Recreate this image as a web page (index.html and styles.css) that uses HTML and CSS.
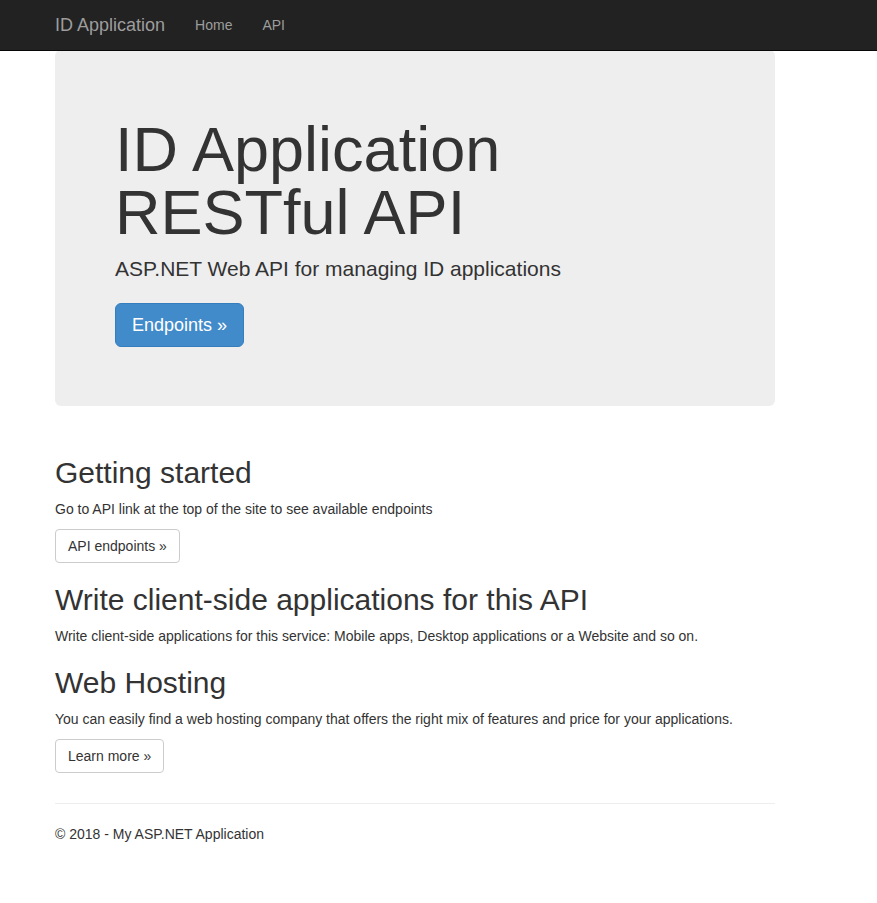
FILE: index.html
```html
<!DOCTYPE html>
<html lang="en">
<head>
<meta charset="utf-8">
<title>ID Application</title>
<link rel="stylesheet" href="styles.css">
</head>
<body>
<div class="navbar">
  <div class="container nav-inner">
    <a class="navbar-brand" href="#">ID Application</a>
    <ul class="nav">
      <li><a href="#">Home</a></li>
      <li><a href="#">API</a></li>
    </ul>
  </div>
</div>
<div class="container body-content">
  <div class="jumbotron">
    <h1>ID Application RESTful API</h1>
    <p class="lead">ASP.NET Web API for managing ID applications</p>
    <p class="jumbo-actions"><a href="#" class="btn btn-primary btn-lg">Endpoints &raquo;</a></p>
  </div>
  <div class="row">
    <div class="col">
      <h2>Getting started</h2>
      <p>Go to API link at the top of the site to see available endpoints</p>
      <p class="actions"><a class="btn btn-default" href="#">API endpoints &raquo;</a></p>
    </div>
    <div class="col">
      <h2>Write client-side applications for this API</h2>
      <p>Write client-side applications for this service: Mobile apps, Desktop applications or a Website and so on.</p>
    </div>
    <div class="col">
      <h2>Web Hosting</h2>
      <p>You can easily find a web hosting company that offers the right mix of features and price for your applications.</p>
      <p class="actions"><a class="btn btn-default" href="#">Learn more &raquo;</a></p>
    </div>
  </div>
  <hr>
  <footer>
    <p>&copy; 2018 - My ASP.NET Application</p>
  </footer>
</div>
</body>
</html>
```
FILE: styles.css
```css
* { box-sizing: border-box; }
html, body { margin: 0; padding: 0; }
body {
  font-family: "Liberation Sans", Arial, Helvetica, sans-serif;
  font-size: 14px;
  line-height: 20px;
  color: #333;
  background: #fff;
  padding-top: 50px;
}
a { text-decoration: none; }
.container {
  width: 750px;
  margin-left: 40px;
  padding: 0 15px;
}
.navbar {
  position: fixed;
  top: 0; left: 0; right: 0;
  height: 51px;
  background: #222;
  border-bottom: 1px solid #080808;
  z-index: 10;
}
.nav-inner {
  display: flex;
  align-items: flex-start;
}
.navbar-brand {
  display: block;
  margin-left: -15px;
  padding: 15px;
  height: 50px;
  font-size: 18px;
  line-height: 20px;
  color: #9d9d9d;
}
.nav {
  display: flex;
  list-style: none;
  margin: 0;
  padding: 0;
}
.nav a {
  display: block;
  padding: 15px;
  font-size: 14px;
  line-height: 20px;
  color: #9d9d9d;
}
.jumbotron {
  background: #eee;
  border-radius: 6px;
  padding: 48px 60px 59px;
  margin-bottom: 30px;
}
.jumbotron h1 {
  margin: 20px 0 10px;
  font-size: 63px;
  line-height: 63px;
  font-weight: 500;
  width: 420px;
}
.jumbotron .lead {
  margin: 0 0 19px;
  font-size: 21px;
  line-height: 30px;
  font-weight: 200;
}
.jumbo-actions {
  display: flex;
  margin: 0;
}
.btn {
  display: inline-block;
  border: 1px solid transparent;
  text-align: center;
  white-space: nowrap;
}
.btn-lg {
  padding: 9px 16px;
  font-size: 18px;
  line-height: 24px;
  border-radius: 6px;
}
.btn-primary {
  color: #fff;
  background: #428bca;
  border-color: #357ebd;
}
.btn-default {
  padding: 6px 12px;
  font-size: 14px;
  line-height: 20px;
  border-radius: 4px;
  color: #333;
  background: #fff;
  border-color: #ccc;
}
.row {
  display: flow-root;
}
.col {
  display: block;
}
.col h2 {
  margin: 20px 0 10px;
  font-size: 30px;
  line-height: 33px;
  font-weight: 500;
}
.col p {
  margin: 0 0 10px;
}
.col .actions {
  display: flex;
}
hr {
  margin: 20px 0;
  border: 0;
  border-top: 1px solid #eee;
  height: 0;
}
footer p {
  margin: 0 0 10px;
}
```
